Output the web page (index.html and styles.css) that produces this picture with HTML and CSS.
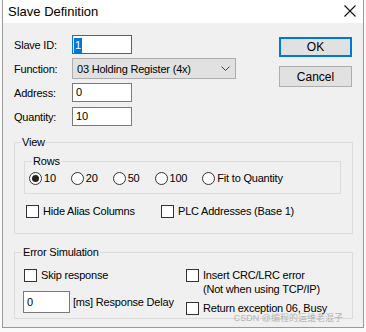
FILE: index.html
```html
<!DOCTYPE html>
<html lang="en">
<head>
  <meta charset="UTF-8">
  <title>Slave Definition</title>
  <link rel="stylesheet" href="styles.css">
</head>
<body>

  <div class="window">
    <div class="titlebar">
      <span class="title">Slave Definition</span>
      <svg class="close" width="12" height="12" viewBox="0 0 12 12">
        <path d="M0.5 0.5 L11.5 11.5 M11.5 0.5 L0.5 11.5" stroke="#111" stroke-width="1.1" fill="none"/>
      </svg>
    </div>

    <div class="content">
      <div class="top">
        <div class="fields">
          <div class="row">
            <span class="label">Slave ID:</span>
            <div class="input focus"><span class="selected">1</span></div>
          </div>
          <div class="row row-select">
            <span class="label">Function:</span>
            <div class="select">
              <span>03 Holding Register (4x)</span>
              <svg width="9" height="5" viewBox="0 0 9 5">
                <path d="M0.5 0.5 L4.5 4.5 L8.5 0.5" stroke="#444" stroke-width="1" fill="none"/>
              </svg>
            </div>
          </div>
          <div class="row">
            <span class="label">Address:</span>
            <div class="input">0</div>
          </div>
          <div class="row row-last">
            <span class="label">Quantity:</span>
            <div class="input">10</div>
          </div>
        </div>

        <div class="buttons">
          <div class="button default">OK</div>
          <div class="button">Cancel</div>
        </div>
      </div>

      <fieldset class="group view">
        <legend>View</legend>
        <fieldset class="group rows">
          <legend>Rows</legend>
          <div class="radios">
            <div class="option"><span class="radio checked"></span>10</div>
            <div class="option"><span class="radio"></span>20</div>
            <div class="option"><span class="radio"></span>50</div>
            <div class="option"><span class="radio"></span>100</div>
            <div class="option"><span class="radio"></span>Fit to Quantity</div>
          </div>
        </fieldset>
        <div class="checks">
          <div class="option"><span class="box"></span>Hide Alias Columns</div>
          <div class="option"><span class="box"></span>PLC Addresses (Base 1)</div>
        </div>
      </fieldset>

      <fieldset class="group error">
        <legend>Error Simulation</legend>
        <div class="error-grid">
          <div class="col">
            <div class="option"><span class="box"></span>Skip response</div>
            <div class="delay">
              <div class="input wide">0</div>
              <span>[ms] Response Delay</span>
            </div>
          </div>
          <div class="col">
            <div class="option top-align"><span class="box"></span><span>Insert CRC/LRC error<br>(Not when using TCP/IP)</span></div>
            <div class="option busy"><span class="box"></span>Return exception 06, Busy</div>
          </div>
        </div>
      </fieldset>

      <div class="watermark">CSDN @编程的运维老混子</div>
    </div>
  </div>

</body>
</html>
```

FILE: styles.css
```css
body {
  margin: 0;
  background-color: #fafafa;
  font-family: "Liberation Sans", Arial, sans-serif;
  font-size: 11px;
  letter-spacing: -0.2px;
  color: #000;
}

.window {
  margin-left: 2px;
  width: 360px;
  height: 327px;
  border: 1px solid #9a9a9a;
  border-top: none;
  background-color: #f0f0f0;
  display: flex;
  flex-direction: column;
}

.titlebar {
  height: 23px;
  background-color: #fff;
  display: flex;
  align-items: center;
  justify-content: space-between;
  padding: 0 7px 0 5px;
  flex-shrink: 0;
}

.title {
  font-size: 13px;
  letter-spacing: 0;
  margin-top: -1px;
}

.close {
  margin-top: -1px;
}

.content {
  position: relative;
  flex: 1;
  padding: 12px 10px 0 11px;
}

.top {
  display: flex;
  justify-content: space-between;
}

.fields {
  display: flex;
  flex-direction: column;
  gap: 4px;
}

.row {
  display: flex;
  align-items: center;
  height: 19px;
}

.row-select {
  height: 21px;
}

.row-last {
  margin-top: 1px;
}

.label {
  width: 58px;
}

.input {
  box-sizing: border-box;
  width: 60px;
  height: 19px;
  border: 1px solid #7a7a7a;
  background-color: #fff;
  padding: 0 3px;
  line-height: 17px;
}

.input.focus {
  border-color: #0078d7;
  padding: 1px 1px;
}

.selected {
  display: inline-block;
  background-color: #0078d7;
  color: #fff;
  height: 15px;
  line-height: 15px;
  padding: 0 1px;
}

.select {
  box-sizing: border-box;
  width: 164px;
  height: 21px;
  border: 1px solid #adadad;
  background-color: #e1e1e1;
  display: flex;
  align-items: center;
  justify-content: space-between;
  padding: 0 5px 0 4px;
}

.buttons {
  display: flex;
  flex-direction: column;
  gap: 9px;
  margin-top: 2px;
  margin-right: 1px;
}

.button {
  box-sizing: border-box;
  width: 73px;
  height: 21px;
  border: 1px solid #adadad;
  background-color: #e1e1e1;
  display: flex;
  align-items: center;
  justify-content: center;
  font-size: 12px;
  letter-spacing: 0;
}

.button.default {
  border: 2px solid #0078d7;
  height: 20px;
}

.group {
  margin: 0;
  border: 1px solid #dcdcdc;
  min-inline-size: 0;
}

.group legend {
  padding: 0 1px;
  line-height: 13px;
}

.view {
  margin-top: 10px;
  padding: 6px 11px 15px 9px;
}

.view > legend {
  margin-left: -3px;
}

.rows {
  padding: 3px 4px 8px 4px;
}

.rows > legend {
  margin-left: 3px;
}

.radios {
  display: flex;
  gap: 15px;
}

.option {
  display: flex;
  align-items: center;
  gap: 2px;
  height: 14px;
}

.radio {
  box-sizing: border-box;
  width: 13px;
  height: 13px;
  border: 1px solid #333;
  border-radius: 50%;
  background-color: #fff;
  display: flex;
  align-items: center;
  justify-content: center;
}

.radio.checked::after {
  content: "";
  width: 7px;
  height: 7px;
  border-radius: 50%;
  background-color: #222;
}

.box {
  box-sizing: border-box;
  width: 13px;
  height: 13px;
  border: 1px solid #333;
  background-color: #fff;
  margin-right: 2px;
  flex-shrink: 0;
}

.checks {
  display: grid;
  grid-template-columns: 135px auto;
  margin-top: 10px;
  padding-left: 2px;
}

.error {
  margin-top: 12px;
  padding: 9px 10px 3px 9px;
}

.error > legend {
  margin-left: -2px;
}

.error-grid {
  display: grid;
  grid-template-columns: 162px auto;
}

.delay {
  display: flex;
  align-items: center;
  gap: 3px;
  margin-top: 9px;
  margin-left: -1px;
}

.input.wide {
  width: 47px;
  height: 22px;
  line-height: 20px;
}

.top-align {
  align-items: flex-start;
  height: auto;
  line-height: 14px;
}

.top-align .box {
  margin-top: 1px;
}

.busy {
  margin-top: 5px;
}

.watermark {
  position: absolute;
  right: 20px;
  bottom: 3px;
  font-size: 9px;
  letter-spacing: 0;
  color: #b5b5b5;
  font-family: "Liberation Sans", "Noto Sans CJK SC", sans-serif;
}
```
